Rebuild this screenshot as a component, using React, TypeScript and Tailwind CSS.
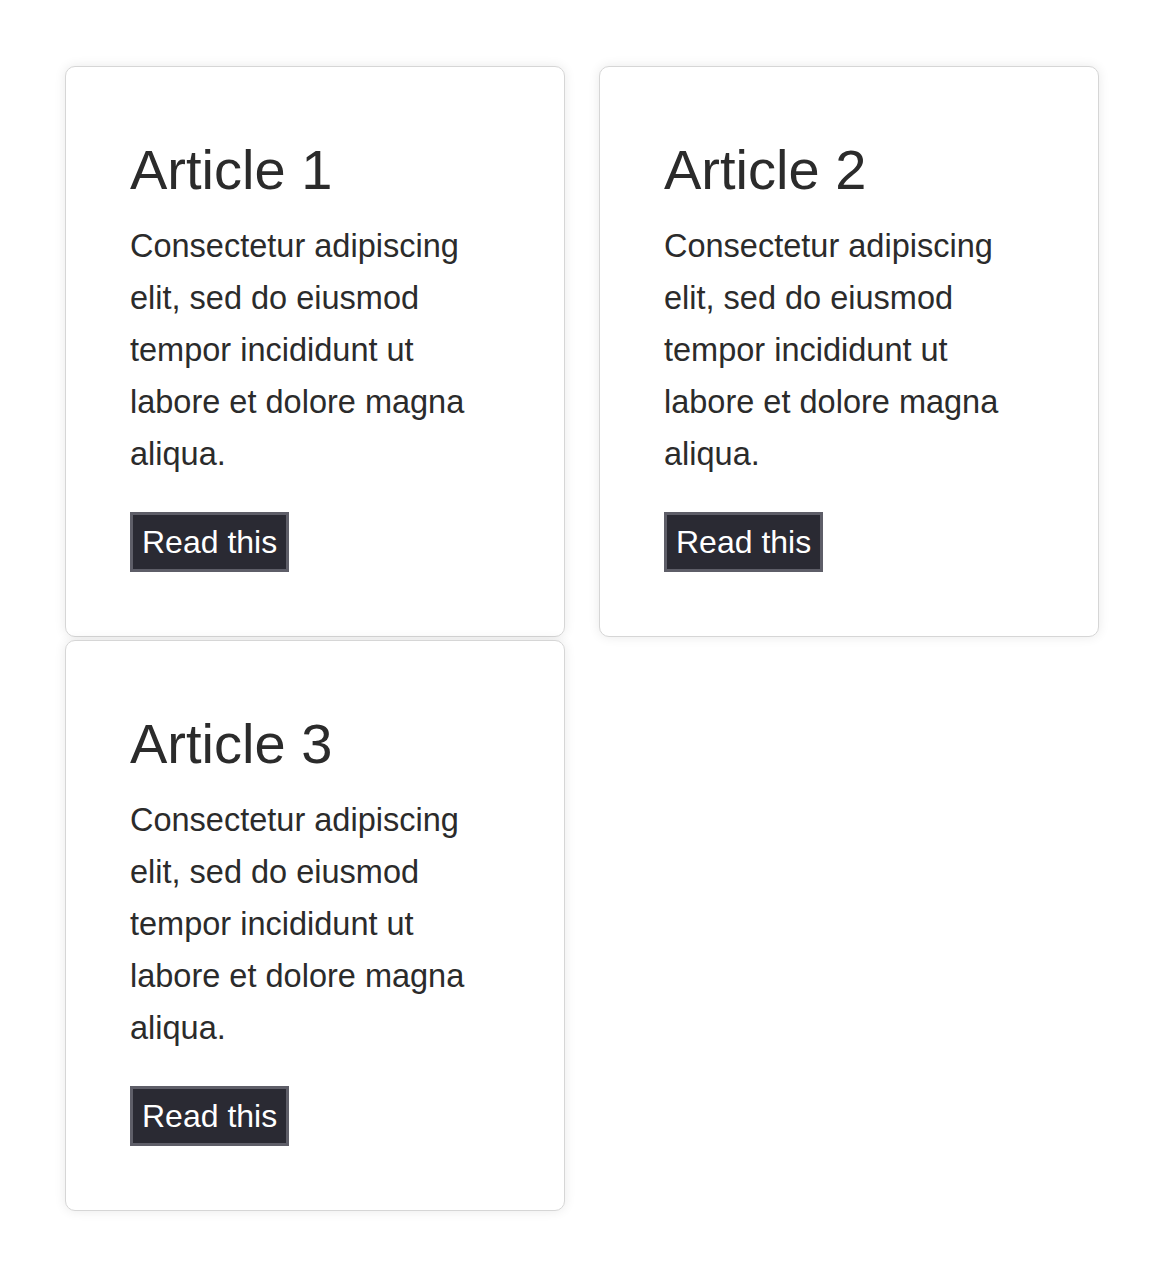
const articles = [
  { id: 1, title: "Article 1" },
  { id: 2, title: "Article 2" },
  { id: 3, title: "Article 3" },
];

function ArticleCard({ title }: { title: string }) {
  return (
    <div className="rounded-[10px] border border-[#d6d6d6] bg-white p-16 shadow-[0_0_12px_rgba(0,0,0,0.09)]">
      <h2 className="text-[56px] leading-[78px] font-normal text-[#2b2b2b]">{title}</h2>
      <p className="mt-[11px] text-[32.5px] leading-[52px] text-[#2b2b2b]">
        Consectetur adipiscing elit, sed do eiusmod tempor incididunt ut labore et dolore magna aliqua.
      </p>
      <button className="mt-8 border-[3px] border-[#5e5e68] bg-[#2a2a33] px-[9px] text-[32px] leading-[54px] text-white">
        Read this
      </button>
    </div>
  );
}

export default function App() {
  return (
    <div className="min-h-screen bg-white pl-[65px] pt-[66px] font-['Liberation_Sans',Arial,sans-serif]">
      <div className="grid grid-cols-[500px_500px] gap-x-[34px] gap-y-[3px] items-start">
        {articles.map((a) => (
          <ArticleCard key={a.id} title={a.title} />
        ))}
      </div>
    </div>
  );
}
